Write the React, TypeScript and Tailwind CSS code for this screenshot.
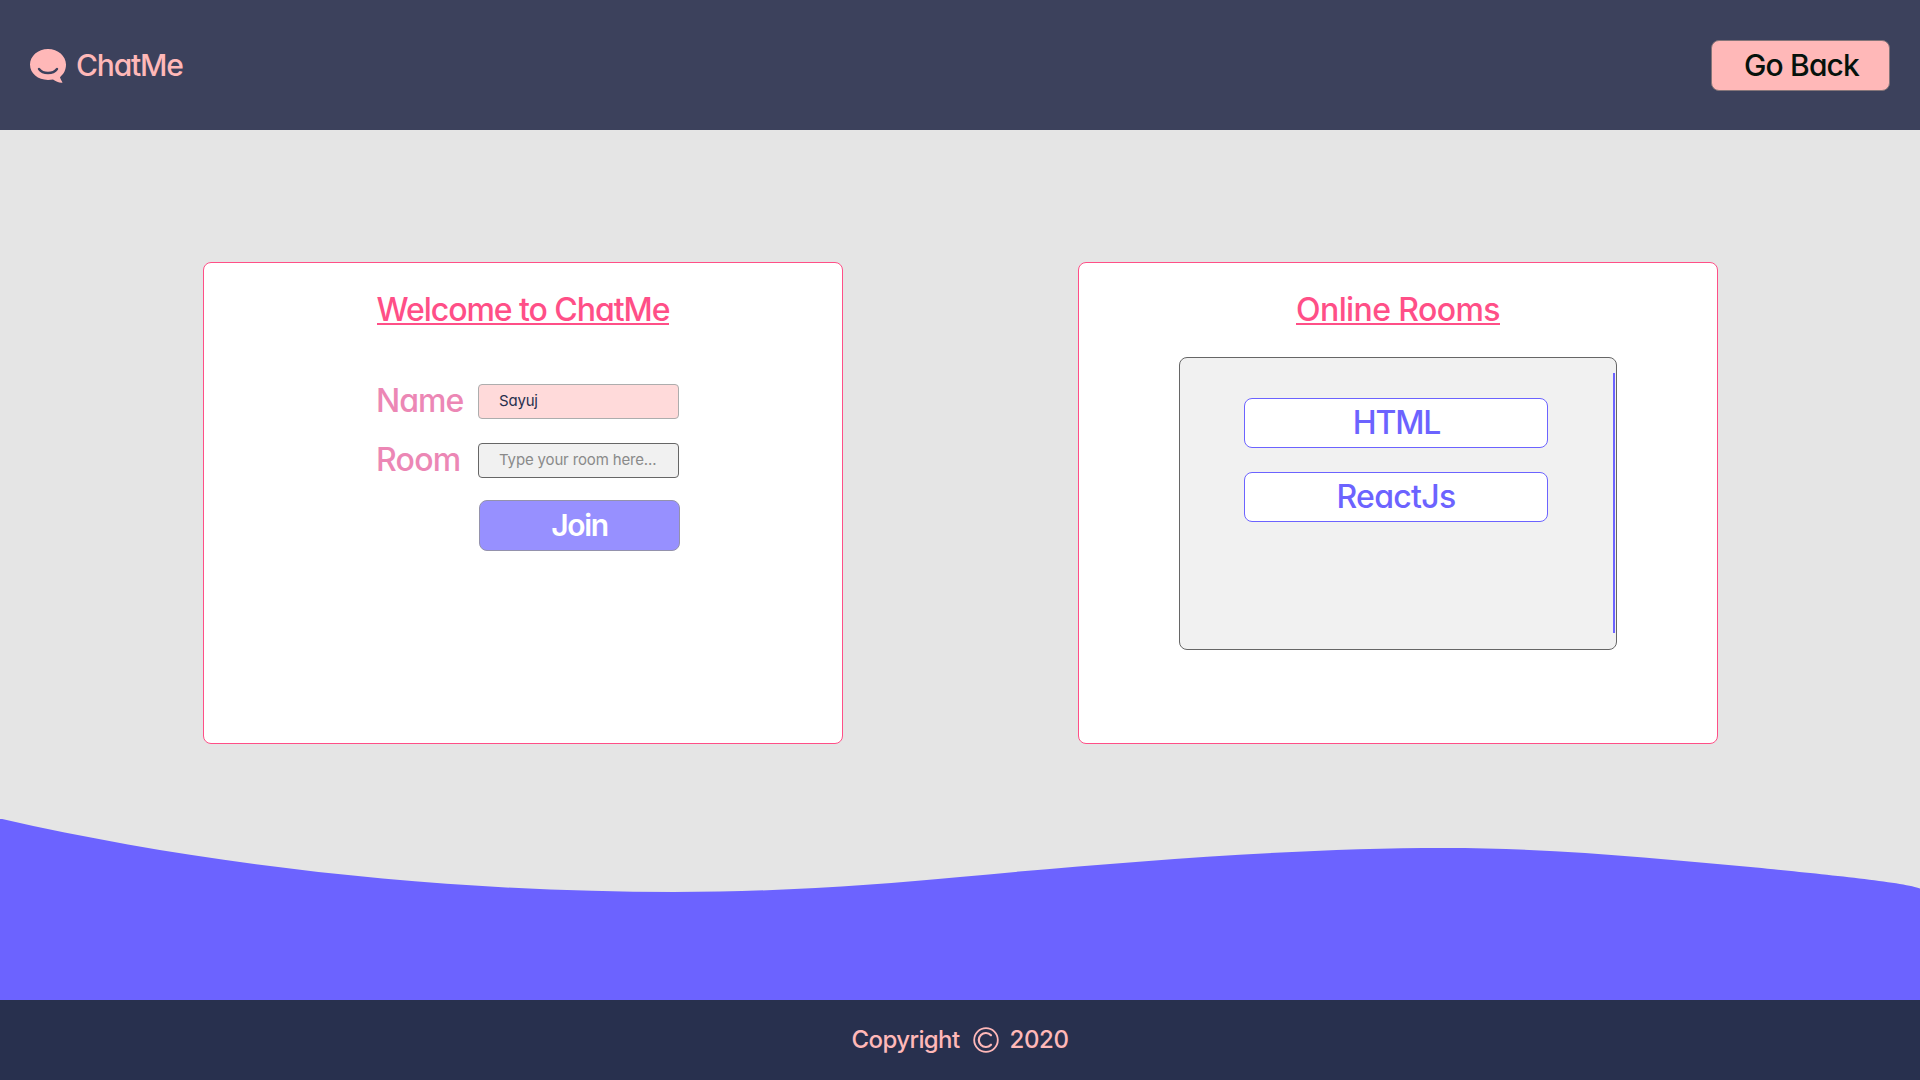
import type { ReactNode } from "react";

function LogoIcon() {
  return (
    <svg className="mt-[2px] h-[35px] w-[37px] shrink-0" viewBox="0 0 37 35">
      <path
        fill="#ffb8b8"
        d="M18 0C8 0 0 7 0 15.600C0 24.500 8 31 18 31C20 31 21.600 30.900 23 30.600C26 32.500 29 34 32.500 33.700C32 32 30.500 30.500 30 28.200C33.800 25 36 21 36 15.600C36 7 28 0 18 0Z"
      />
      <path d="M9 20C13 25.400 23 25.400 27 20" fill="none" stroke="#3c415c" strokeWidth="2.400" strokeLinecap="round" />
    </svg>
  );
}

function Card({ title, titleClass, children }: { title: string; titleClass: string; children: ReactNode }) {
  return (
    <section className="flex h-[482px] w-[640px] flex-col items-center rounded-lg border border-[#ff4f87] bg-white pt-[27px] text-[#ff4f87]">
      <h2 className="flex h-[35px] items-center justify-center border-b-2 border-[#ff4f87] pt-[7px] font-medium whitespace-nowrap">
        <span className={titleClass}>{title}</span>
      </h2>
      {children}
    </section>
  );
}

export default function App() {
  return (
    <div className="flex h-[1080px] w-[1920px] flex-col overflow-hidden bg-[#e5e5e5] font-['Inter',sans-serif] text-[32px] leading-10 [font-feature-settings:'cv11','calt'_0]">
      <header className="flex h-[130px] items-center justify-between bg-[#3c415c] pr-[30px] pl-[30px]">
        <div className="flex items-center gap-[9px] text-[#ffb8b8]">
          <LogoIcon />
          <span className="pb-px text-[30px] font-medium tracking-[-1.2px]">ChatMe</span>
        </div>
        <button className="flex h-[51px] w-[179px] items-center justify-center rounded-lg border border-[#857579] bg-[#ffb8b8] pb-px pl-[2px] text-[30px] font-medium tracking-[-0.85px] text-[#06120c]">
          Go Back
        </button>
      </header>

      <main className="flex flex-1 flex-col">
        <div className="flex h-[689px] justify-between pt-[132px] pr-[202px] pl-[203px]">
          <Card title="Welcome to ChatMe" titleClass="tracking-[-1.05px]">
            <form className="mt-[56px] ml-[9px] flex w-[303px] flex-col">
              <div className="flex items-center justify-between">
                <label className="pb-px font-medium tracking-[-1px] text-[#ec87b5]">Name</label>
                <div className="flex h-[35px] w-[201px] items-center rounded border border-[#adadad] bg-[#ffdada] pb-[2px] pl-5 text-[15px] tracking-[-0.2px] text-[#28304e]">
                  Sayuj
                </div>
              </div>
              <div className="mt-[18px] flex items-center justify-between">
                <label className="pb-px font-medium tracking-[-0.7px] text-[#ec87b5]">Room</label>
                <div className="flex h-[35px] w-[201px] items-center rounded border border-[#666666] bg-[#f1f1f1] pb-[2px] pl-5 text-[15px] tracking-[-0.15px] text-[#8a8a8a]">
                  Type your room here...
                </div>
              </div>
              <button type="button" className="mt-[19px] -mr-px flex h-[51px] w-[201px] items-center justify-center self-end rounded-lg border border-[#9492ac] bg-[#9790ff] pb-[2px] text-[30px] font-semibold tracking-[-1.3px] text-white">
                Join
              </button>
            </form>
          </Card>

          <Card title="Online Rooms" titleClass="tracking-[-0.6px]">
            <div className="mt-[32px] flex h-[293px] w-[438px] justify-between rounded-lg border border-[#666666] bg-[#f1f1f1] pr-px pl-16">
              <div className="flex flex-col gap-6 pt-10 font-medium text-[#6c63ff]">
                <div className="flex h-[50px] w-[304px] items-center justify-center rounded-lg border border-[#6c63ff] bg-white pb-px pl-px tracking-[-1.1px]">HTML</div>
                <div className="flex h-[50px] w-[304px] items-center justify-center rounded-lg border border-[#6c63ff] bg-white pb-px tracking-[-0.7px]">ReactJs</div>
              </div>
              <div className="mt-[15px] h-[260px] w-[2px] bg-[#6c63ff]" />
            </div>
          </Card>
        </div>
        <svg className="h-[181px] w-full" viewBox="0 819 1920 181">
          <path
            fill="#6c63ff"
            d="M0 818.500C220 869 460 892 674 892C780 892 880 884.500 960 877C1110 863 1290 848 1444 848C1560 848 1660 859 1756 867.500C1810 873 1905 882 1920 888.500V1000H0Z"
          />
        </svg>
      </main>

      <footer className="flex h-20 items-center justify-center bg-[#28304e] text-2xl font-medium text-[#ffb8b8]">
        <span className="tracking-[-0.6px]">Copyright</span>
        <svg className="mr-[11px] ml-[13px] size-[26px]" viewBox="0 0 26 26" fill="none" stroke="#ffb8b8">
          <circle cx="13" cy="13" r="11.800" strokeWidth="1.800" />
          <path d="M18 8.300A7 7 0 1 0 18 17.700" strokeWidth="2.200" strokeLinecap="round" />
        </svg>
        <span className="tracking-[-0.4px]">2020</span>
      </footer>
    </div>
  );
}
